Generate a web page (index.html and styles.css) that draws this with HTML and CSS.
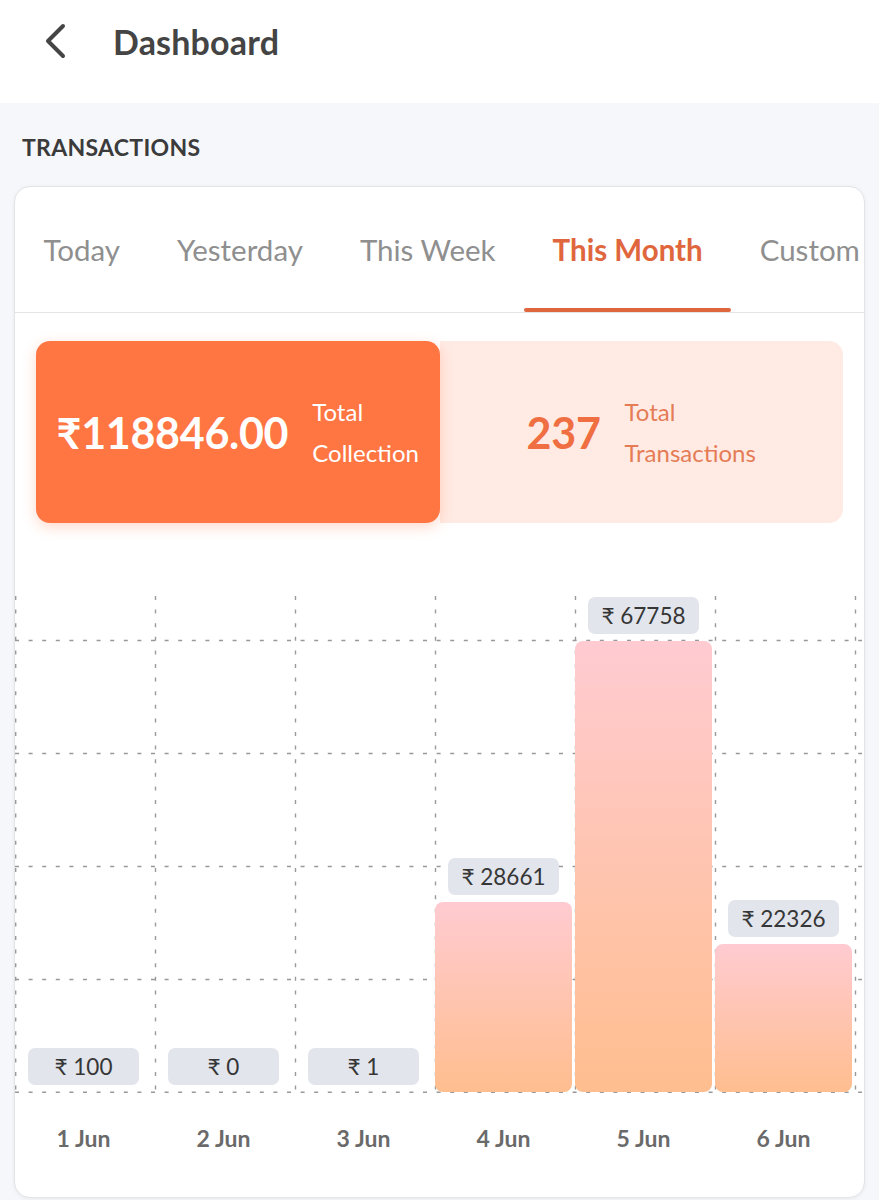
FILE: index.html
```html
<!DOCTYPE html>
<html>
<head>
<meta charset="utf-8">
<link rel="stylesheet" href="styles.css">
</head>
<body>
<header class="topbar">
  <svg class="back" width="26" height="36" viewBox="0 0 26 36"><path d="M20 3 L5 18 L20 33" fill="none" stroke="#454545" stroke-width="4" stroke-linecap="round" stroke-linejoin="round"/></svg>
  <h1 class="title">Dashboard</h1>
</header>
<main class="page">
  <h2 class="section">TRANSACTIONS</h2>
  <div class="card">
    <nav class="tabs">
      <div class="tab">Today</div>
      <div class="tab">Yesterday</div>
      <div class="tab">This Week</div>
      <div class="tab active">This Month</div>
      <div class="tab">Custom</div>
    </nav>
    <div class="summary">
      <div class="sum sum-main">
        <div class="big">₹118846.00</div>
        <div class="lbl">Total<br>Collection</div>
      </div>
      <div class="sum sum-alt">
        <div class="big">237</div>
        <div class="lbl">Total<br>Transactions</div>
      </div>
    </div>
    <div class="chart">
      <svg class="grid" width="847" height="497" viewBox="0 0 847 497">
        <g stroke="#999999" stroke-width="1.4" stroke-dasharray="4 9.6" fill="none">
          <line x1="0.7" y1="0" x2="0.7" y2="496"/>
          <line x1="140.5" y1="0" x2="140.5" y2="496"/>
          <line x1="280.5" y1="0" x2="280.5" y2="496"/>
          <line x1="420.5" y1="0" x2="420.5" y2="496"/>
          <line x1="560.5" y1="0" x2="560.5" y2="496"/>
          <line x1="700.5" y1="0" x2="700.5" y2="496"/>
          <line x1="840.5" y1="0" x2="840.5" y2="496"/>
          <line x1="0" y1="44.5" x2="847" y2="44.5"/>
          <line x1="0" y1="157.5" x2="847" y2="157.5"/>
          <line x1="0" y1="270.5" x2="847" y2="270.5"/>
          <line x1="0" y1="383.5" x2="847" y2="383.5"/>
          <line x1="0" y1="496.3" x2="847" y2="496.3"/>
        </g>
      </svg>
      <div class="cols">
        <div class="col"><div class="val">₹ 100</div><div class="bar" style="height:0px"></div></div>
        <div class="col"><div class="val">₹ 0</div><div class="bar" style="height:0px"></div></div>
        <div class="col"><div class="val">₹ 1</div><div class="bar" style="height:0px"></div></div>
        <div class="col"><div class="val">₹ 28661</div><div class="bar" style="height:190px"></div></div>
        <div class="col"><div class="val">₹ 67758</div><div class="bar" style="height:451px"></div></div>
        <div class="col"><div class="val">₹ 22326</div><div class="bar" style="height:148px"></div></div>
      </div>
    </div>
    <div class="xaxis">
      <div class="xl">1 Jun</div>
      <div class="xl">2 Jun</div>
      <div class="xl">3 Jun</div>
      <div class="xl">4 Jun</div>
      <div class="xl">5 Jun</div>
      <div class="xl">6 Jun</div>
    </div>
  </div>
</main>
</body>
</html>
```
FILE: styles.css
```css
* { box-sizing: border-box; }
html, body { margin: 0; padding: 0; }
body {
  width: 879px;
  min-height: 1200px;
  background: #f6f7fb;
  font-family: Lato, "Noto Sans", "DejaVu Sans", sans-serif;
  overflow: hidden;
}
.topbar {
  height: 103px;
  background: #ffffff;
  display: flex;
  align-items: flex-start;
  padding: 22px 0 0 43px;
}
.back { display: block; flex: none; margin-top: 1px; }
.title {
  margin: 0 0 0 44px;
  font-size: 34px;
  line-height: 40px;
  font-weight: 700;
  color: #444444;
  letter-spacing: 0.2px;
}
.page { padding: 0; }
.section {
  margin: 0;
  padding: 30px 0 0 22px;
  height: 83px;
  font-size: 23px;
  line-height: 28px;
  font-weight: 700;
  color: #3b3b3b;
  letter-spacing: 0.3px;
}
.card {
  margin: 0 14px;
  width: 851px;
  background: #ffffff;
  border: 1px solid #e3e4e8;
  border-radius: 16px;
  box-shadow: 0 1px 4px rgba(0,0,0,0.06);
  overflow: hidden;
}
.tabs {
  display: flex;
  height: 126px;
  border-bottom: 1px solid #e4e4e6;
  white-space: nowrap;
}
.tab {
  flex: none;
  padding: 45px 28.5px 0;
  font-size: 29.5px;
  line-height: 36px;
  color: #8f8f8f;
  position: relative;
}
.tab.active {
  color: #e0663d;
  font-weight: 700;
}
.tab.active::after {
  content: "";
  position: absolute;
  left: 0;
  right: 0;
  bottom: 0;
  height: 4px;
  border-radius: 2px;
  background: #e0663d;
}
.summary {
  display: flex;
  margin: 28px 21px 0;
  height: 182px;
}
.sum {
  flex: 1;
  display: flex;
  align-items: center;
  justify-content: center;
  gap: 24px;
}
.sum-main {
  background: #ff7643;
  border-radius: 14px;
  box-shadow: 0 4px 14px rgba(255, 118, 67, 0.28);
  color: #ffffff;
  position: relative;
  z-index: 1;
}
.sum-alt {
  background: #ffebe4;
  border-radius: 0 14px 14px 0;
}
.big {
  font-size: 43px;
  font-weight: 700;
  letter-spacing: -0.3px;
}
.lbl {
  font-size: 24px;
  line-height: 41px;
}
.sum-alt .big { color: #ef6f42; }
.sum-alt .lbl { color: #e57c56; }
.chart {
  position: relative;
  margin-top: 73px;
  height: 497px;
}
.grid { position: absolute; left: 0; top: 0; }
.cols {
  position: relative;
  display: flex;
  height: 496px;
  align-items: flex-end;
}
.col {
  width: 140px;
  padding-right: 3px;
  display: flex;
  flex-direction: column;
  align-items: center;
}
.val {
  width: 111px;
  height: 37px;
  background: #e2e5ec;
  border-radius: 7px;
  font-size: 22.5px;
  color: #363636;
  display: flex;
  align-items: center;
  justify-content: center;
  margin-bottom: 7px;
}
.bar {
  width: 137px;
  border-radius: 8px;
  background: linear-gradient(to bottom, #ffcbd1, #ffbe8f);
}
.xaxis {
  display: flex;
  height: 104px;
  padding-top: 31px;
}
.xl {
  width: 140px;
  padding-right: 3px;
  text-align: center;
  font-size: 23px;
  font-weight: 700;
  color: #6a6a6a;
  line-height: 28px;
}
```
